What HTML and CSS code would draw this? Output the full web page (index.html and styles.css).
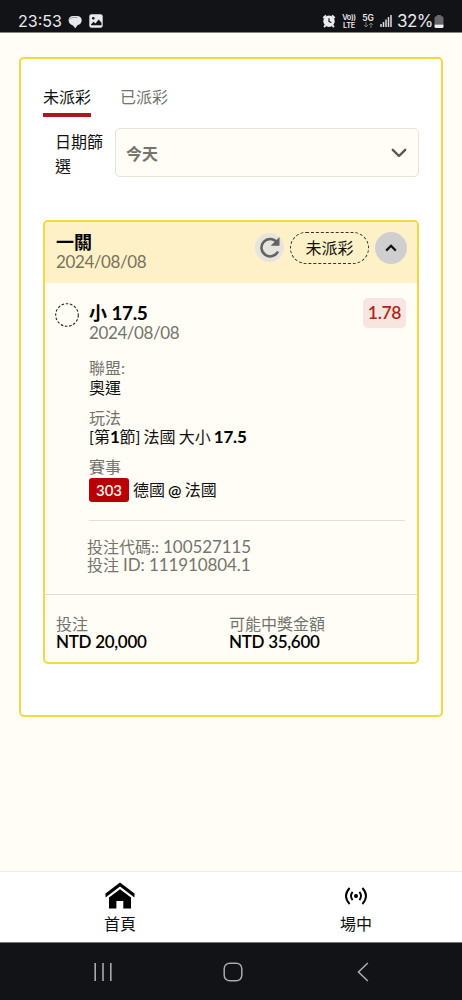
FILE: index.html
```html
<!DOCTYPE html>
<html lang="zh-Hant">
<head>
<meta charset="utf-8">
<meta name="viewport" content="width=device-width, initial-scale=1">
<title>投注記錄</title>
<link rel="stylesheet" href="styles.css">
</head>
<body>
<header class="status">
  <span class="clock">23:53</span>
  <svg class="ico-chat" width="14" height="14" viewBox="0 0 14 14"><path d="M5 1h4c3 0 4.700 1.800 4.700 4.300S12 9.700 9.800 9.900L7.200 13.200L5 10.500C2.800 10 .6 8 .6 5.300.6 2.700 2.300 1 5 1z" fill="#e9e9ec"/><path d="M1.300 4.500C2.500 2.300 6 2.200 9.500 2.600" fill="none" stroke="#77777c" stroke-width=".7"/></svg>
  <svg class="ico-pic" width="14" height="14" viewBox="0 0 14 14"><rect x=".3" y=".3" width="13.400" height="13.400" rx="2.200" fill="#e9e9ec"/><circle cx="4.300" cy="4.300" r="1.300" fill="#121317"/><path d="M2 10.500l2.500-2.700 2 1.700 3.200-4 2.800 3.200v2.500H2z" fill="#121317"/></svg>
  <span class="grow"></span>
  <svg class="ico-alarm" width="14" height="14" viewBox="0 0 14 14"><circle cx="7" cy="7.300" r="5.700" fill="#ededf0"/><path d="M1.300 4L4 1.300M12.700 4L10 1.300M3.500 11.500L2 13M10.500 11.500L12 13" stroke="#ededf0" stroke-width="1.800"/><path d="M7 4.200v3.300l2.500 1" fill="none" stroke="#121317" stroke-width="1.200"/></svg>
  <span class="net volte"><b>Vo))</b><b>LTE</b></span>
  <span class="net fiveg"><b>5G</b><svg width="11" height="6" viewBox="0 0 11 6"><path d="M3 0v5M1 3l2 2 2-2M8 6V1M6 3l2-2 2 2" fill="none" stroke="#77787d" stroke-width="1"/></svg></span>
  <svg class="ico-signal" width="12" height="13" viewBox="0 0 12 13"><path d="M1 10v3M3.500 8v5M6 5.500V13M8.500 3v10M11 1v12" stroke="#dedee2" stroke-width="1.500"/></svg>
  <span class="pct">32%</span>
  <svg class="ico-batt" width="10" height="14" viewBox="0 0 10 14"><path d="M3 0h4v1.300h1Q9.500 1.500 9.500 3v6.500H.5V3Q.5 1.500 2 1.300h1z" fill="#69696d"/><path d="M.5 9.500h9v2Q9.500 13 8 13H2Q.5 13 .5 11.500z" fill="#f0f0f2"/></svg>
</header>

<main class="page">
  <section class="panel">
    <nav class="tabs">
      <a class="tab active">未派彩</a>
      <a class="tab">已派彩</a>
    </nav>
    <div class="filter">
      <label class="filter-label">日期篩選</label>
      <div class="select"><span>今天</span>
        <svg width="16" height="10" viewBox="0 0 16 10"><path d="M1.800 1.800L8 8l6.200-6.200" fill="none" stroke="#575751" stroke-width="2.400" stroke-linecap="round" stroke-linejoin="round"/></svg>
      </div>
    </div>

    <article class="bet">
      <div class="bet-head">
        <div class="bet-title"><strong>一關</strong><span class="muted date">2024/08/08</span></div>
        <span class="refresh"><svg width="28" height="28" viewBox="0 0 28 28"><path d="M21.800 9A8.700 8.700 0 1 0 23 18.500" fill="none" stroke="#63635f" stroke-width="2.500"/><path d="M24.500 4v8.800h-8.800z" fill="#63635f"/></svg></span>
        <span class="state">未派彩</span>
        <span class="toggle"><svg width="12" height="8" viewBox="0 0 12 8"><path d="M1.200 6.600L6 1.800l4.800 4.800" fill="none" stroke="#111" stroke-width="2.200"/></svg></span>
      </div>
      <div class="pick">
        <svg class="ring" width="24" height="24" viewBox="0 0 24 24"><circle cx="12" cy="12" r="11.300" fill="none" stroke="#222" stroke-width="1.100" stroke-dasharray="2.600 1.700"/></svg>
        <div class="pick-main">
          <div class="pick-top">
            <div class="pick-name"><strong>小 <span class="line">17.5</span></strong><span class="muted date">2024/08/08</span></div>
            <span class="odds">1.78</span>
          </div>
          <dl class="facts">
            <dt>聯盟:</dt><dd>奧運</dd>
            <dt>玩法</dt><dd class="market">[第<b>1</b>節] 法國 大小 <b>17.5</b></dd>
            <dt>賽事</dt><dd class="match"><span class="code">303</span><span class="teams">德國 <b>@</b> 法國</span></dd>
          </dl>
          <div class="ids"><span>投注代碼:: <span class="num">100527115</span></span><span>投注 <span class="num">ID: 111910804.1</span></span></div>
        </div>
      </div>
      <div class="totals">
        <div><span class="muted">投注</span><strong>NTD 20,000</strong></div>
        <div><span class="muted">可能中獎金額</span><strong>NTD 35,600</strong></div>
      </div>
    </article>
  </section>
</main>

<nav class="bottom">
  <a class="dest"><svg width="30" height="28" viewBox="0 0 30 28"><path d="M.5 11.500L15 .5l14.500 11v4L15 4.500.5 15.500z"/><path d="M4 15.500L15 7.200l11 8.300V26.500h-7.700V19h-6.900v7.500H4z"/></svg><span>首頁</span></a>
  <a class="dest"><svg width="24" height="28" viewBox="0 0 24 28"><circle cx="12" cy="14" r="2"/><path d="M8.600 9.800Q5.400 14 8.600 18.200M15.400 9.800Q18.600 14 15.400 18.200M5.600 6Q-1.600 14 5.600 22M18.400 6Q25.600 14 18.400 22" fill="none" stroke="#000" stroke-width="1.900"/></svg><span>場中</span></a>
</nav>
<footer class="system">
  <svg width="18" height="20" viewBox="0 0 18 20"><path d="M1.200 1v18M9 1v18M16.800 1v18" stroke="#a9aaad" stroke-width="1.600"/></svg>
  <svg class="home-key" width="20" height="20" viewBox="0 0 20 20"><rect x="1.200" y="1.200" width="17.600" height="17.600" rx="5.500" fill="none" stroke="#a9aaad" stroke-width="1.500"/></svg>
  <svg width="12" height="20" viewBox="0 0 12 20"><path d="M10.800 1L1.500 10l9.300 9" fill="none" stroke="#a9aaad" stroke-width="1.600"/></svg>
</footer>
</body>
</html>
```

FILE: styles.css
```css
* { box-sizing: border-box; }

body {
  margin: 0;
  width: 462px;
  height: 1000px;
  overflow: hidden;
  display: flex;
  flex-direction: column;
  background: #fffdf5;
  color: #111;
  font: 16px/20px Lato, "Noto Sans CJK TC", sans-serif;
}

svg { display: block; flex: none; }
strong, b { font-weight: 600; color: #000; }

.status {
  height: 33px;
  flex: none;
  display: flex;
  align-items: flex-start;
  padding: 0 18px;
  background: #121317;
  border-bottom: 1px solid #85837f;
  color: #e9e9ec;
  font-family: Inter, sans-serif;
}
.status b { color: inherit; }
.clock { margin-top: 11px; font-size: 16px; width: 50px; }
.ico-chat { margin-top: 15px; }
.ico-pic { margin: 14px 0 0 7px; }
.grow { flex: 1; }
.ico-alarm { margin-top: 14px; }
.net { display: flex; flex-direction: column; align-items: center; font-size: 7.500px; line-height: 8px; margin-top: 14px; }
.volte { margin-left: 6px; width: 14px; }
.volte b { letter-spacing: -.4px; }
.fiveg { margin-left: 6px; width: 12px; }
.fiveg b { font-size: 8.500px; }
.ico-signal { margin: 14px 0 0 6px; }
.pct { margin: 11px 0 0 5px; font-size: 17px; letter-spacing: -.5px; width: 36px; white-space: nowrap; }
.ico-batt { margin: 15px 0 0 1px; }

.page { flex: 1; padding: 24px 19px 0; }
.panel {
  height: 660px;
  padding: 0 22px;
  border: 2px solid #f4d742;
  border-radius: 5px;
  background: #fff;
}

.tabs { display: flex; gap: 29px; padding-top: 26px; }
.tab { height: 32px; line-height: 24px; color: #74746f; }
.tab.active { color: #111; border-bottom: 4px solid #ac181e; }

.filter { display: flex; margin-top: 11px; height: 49px; }
.filter-label { width: 72px; padding: 2px 10px 0 12px; line-height: 24px; }
.select {
  flex: 1;
  display: flex;
  align-items: center;
  justify-content: space-between;
  padding: 0 11px 0 10px;
  border: 1px solid #e5e4d8;
  border-radius: 5px;
  background: #fffdf5;
  color: #74746d;
  font-weight: 600;
}
.select span { padding-top: 2px; }

.bet {
  margin-top: 43px;
  height: 444px;
  border: 2px solid #f4d742;
  border-radius: 5px;
  background: #fffdf5;
  overflow: hidden;
}
.muted { color: #74746f; }
.date { font-size: 17px; letter-spacing: -.4px; }
.bet-head { display: flex; height: 61px; padding: 0 11px; background: #fef1c7; }
.bet-title { flex: 1; display: flex; flex-direction: column; padding-top: 10px; }
.bet-title .muted { color: #79725e; }
.bet-title strong { font-size: 18px; }
.refresh { width: 29px; height: 29px; margin: 11px 6px 0 0; border-radius: 50%; background: #e6e4df; }
.state {
  width: 79px;
  height: 32px;
  margin-top: 10px;
  border: 1px dashed #333;
  border-radius: 16px;
  text-align: center;
  line-height: 29px;
}
.toggle { display: flex; align-items: center; justify-content: center; width: 32px; height: 32px; margin: 10px -1px 0 6px; border-radius: 50%; background: #d0cfcf; }

.pick { display: flex; height: 311px; padding: 15px 11px 0 10px; }
.ring { margin-top: 5px; }
.pick-main { flex: 1; margin-left: 10px; }
.pick-top { display: flex; justify-content: space-between; }
.pick-name { display: flex; flex-direction: column; padding-top: 5px; }
.pick-name strong { height: 20px; font-size: 18px; }
.line { font-size: 19px; font-weight: 700; letter-spacing: -.4px; line-height: 1; }
.pick-name .date { line-height: 19px; }
.odds { width: 43px; height: 30px; border-radius: 5px; background: #f9e5df; color: #ad2420; font-size: 17.500px; font-weight: 600; letter-spacing: -.3px; line-height: 30px; text-align: center; }
.facts { margin: 16px 0 0; }
.facts dt { color: #74746f; line-height: 20px; }
.facts dd { margin: 0 0 10px; line-height: 20px; white-space: nowrap; }
.facts .market { height: 20px; margin-bottom: 9px; line-height: 18px; word-spacing: -1px; }
.market b { font-size: 17px; font-weight: 700; letter-spacing: -.2px; line-height: 1; }
.facts .match { display: flex; align-items: center; gap: 4px; height: 24px; margin: 1px 0 0; }
.teams { word-spacing: -1px; }
.code { width: 40px; height: 24px; border-radius: 3px; background: #b90006; color: #fff4ed; font-size: 15px; font-weight: 600; line-height: 24px; text-align: center; }
.ids { display: flex; flex-direction: column; margin: 18px 1px 0 0; padding-top: 17px; border-top: 1px solid #e2e0da; color: #74746f; line-height: 18px; }
.ids > span { height: 18px; margin-left: -2px; }
.num { font-size: 17px; letter-spacing: -.1px; line-height: 1; }

.totals { display: grid; grid-template-columns: 173px 1fr; height: 68px; padding: 20px 11px 0; border-top: 1px solid #dedcd6; line-height: 18px; }
.totals div { display: flex; flex-direction: column; }
.totals strong { font-size: 17px; letter-spacing: -.3px; }

.bottom { flex: none; display: grid; grid-template-columns: 236px 236px; height: 71px; padding-left: 2px; border-top: 1px solid #eeece4; background: #fff; }
.dest { display: flex; flex-direction: column; align-items: center; padding-top: 10px; }
.dest span { margin-top: 4px; }
.system { flex: none; display: flex; align-items: flex-start; height: 58px; padding: 19px 93px 0 94px; justify-content: space-between; border-top: 1px solid #77777a; background: #121317; }
.home-key { margin-right: 4px; }
```
